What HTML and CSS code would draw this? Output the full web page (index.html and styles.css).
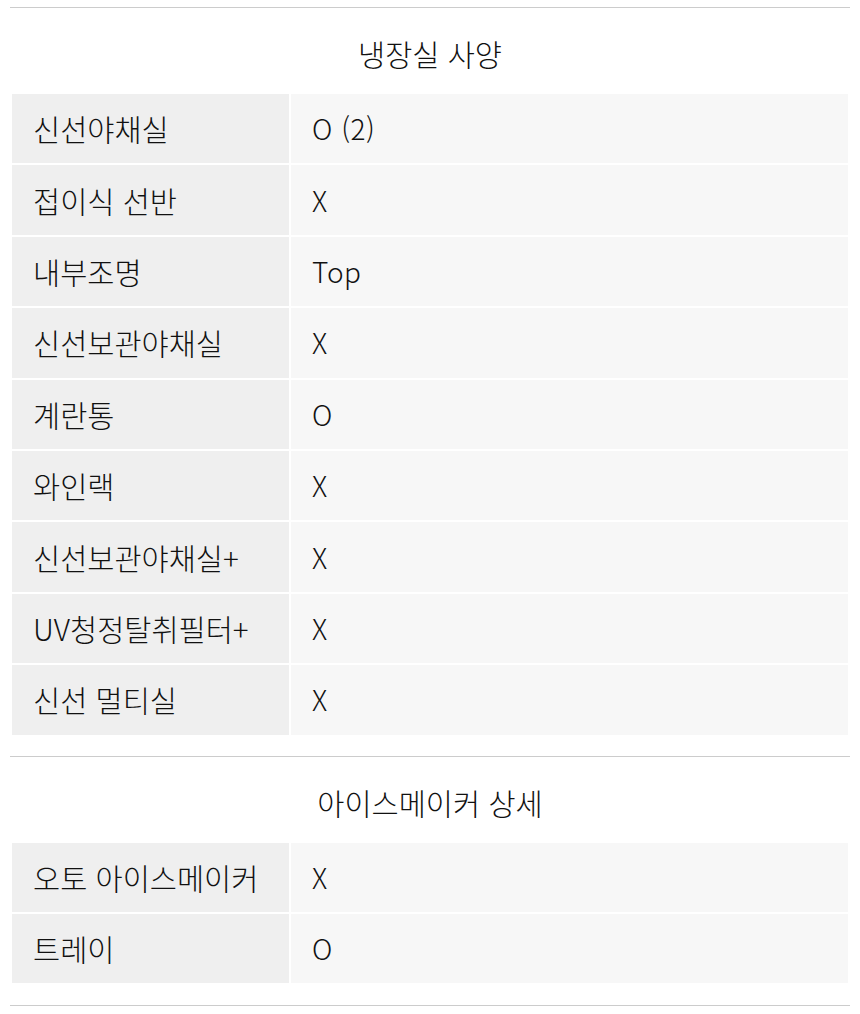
FILE: index.html
```html
<!DOCTYPE html>
<html lang="ko">
<head>
<meta charset="utf-8">
<link rel="stylesheet" href="styles.css">
</head>
<body>
<div class="spec">
  <section class="group">
    <h2 class="group-title">냉장실 사양</h2>
    <table class="spec-table">
      <tr><th>신선야채실</th><td>O (2)</td></tr>
      <tr><th>접이식 선반</th><td>X</td></tr>
      <tr><th>내부조명</th><td>Top</td></tr>
      <tr><th>신선보관야채실</th><td>X</td></tr>
      <tr><th>계란통</th><td>O</td></tr>
      <tr><th>와인랙</th><td>X</td></tr>
      <tr><th>신선보관야채실+</th><td>X</td></tr>
      <tr><th>UV청정탈취필터+</th><td>X</td></tr>
      <tr><th>신선 멀티실</th><td>X</td></tr>
    </table>
  </section>
  <section class="group group-last">
    <h2 class="group-title">아이스메이커 상세</h2>
    <table class="spec-table">
      <tr><th>오토 아이스메이커</th><td>X</td></tr>
      <tr><th>트레이</th><td>O</td></tr>
    </table>
  </section>
  <div class="end-line"></div>
</div>
</body>
</html>
```
FILE: styles.css
```css
html, body {
  margin: 0;
  padding: 0;
  background: #fff;
}
body {
  font-family: "Noto Sans CJK KR", "Noto Sans", sans-serif;
  color: #111;
}
.spec {
  padding: 7px 10px 0 10px;
}
.group {
  border-top: 1px solid #ccc;
  padding-bottom: 19px;
}
.group-last {
  padding-bottom: 20px;
}
.group-title {
  margin: 0;
  height: 86px;
  padding-top: 4px;
  box-sizing: border-box;
  display: flex;
  align-items: center;
  justify-content: center;
  font-size: 29.5px;
  font-weight: 300;
  color: #111;
}
.spec-table {
  width: 100%;
  border-collapse: separate;
  border-spacing: 2px;
  margin-top: -2px;
}
.spec-table th,
.spec-table td {
  height: 69.4px;
  padding: 0 20px 1px 21px;
  font-weight: 300;
  text-align: left;
  vertical-align: middle;
  color: #111;
  box-sizing: border-box;
}
.spec-table th {
  width: 277px;
  background: #efefef;
  font-size: 29.5px;
}
.spec-table td {
  background: #f7f7f7;
  font-size: 28px;
  letter-spacing: 0.5px;
}
.end-line {
  border-top: 1px solid #ccc;
}
```
